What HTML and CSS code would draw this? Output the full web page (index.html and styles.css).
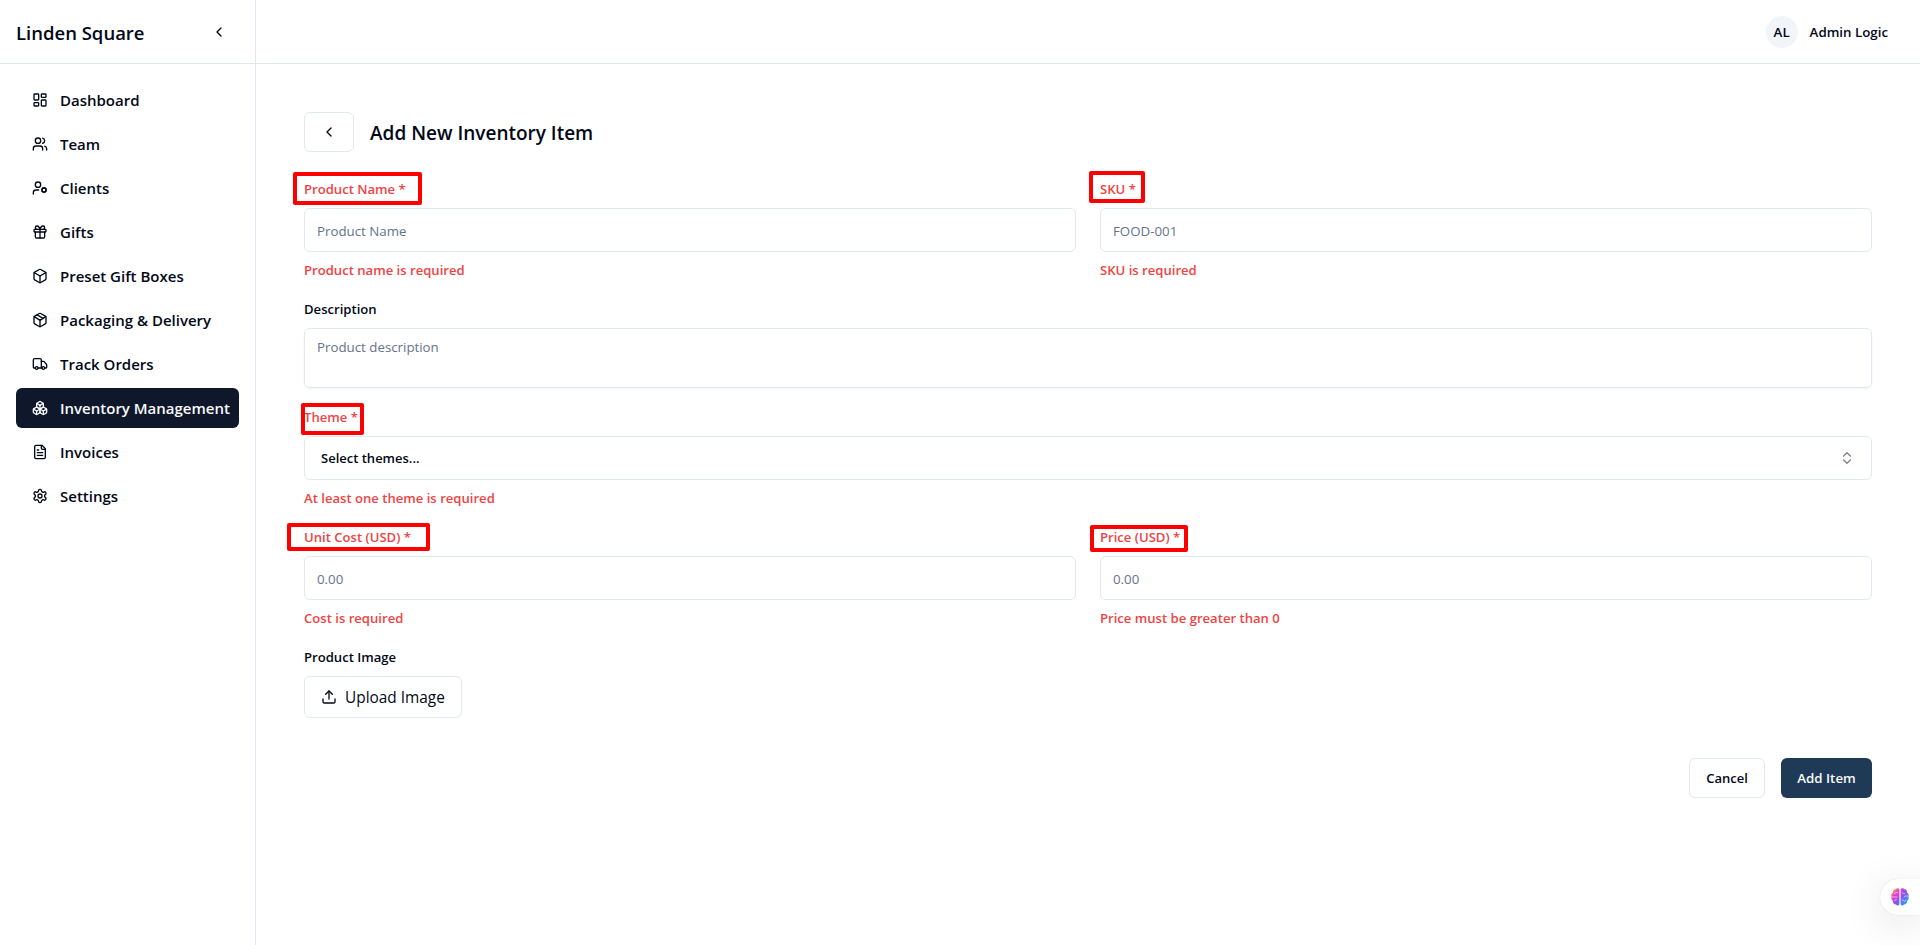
FILE: index.html
```
<!DOCTYPE html>
<html lang="en">
<head>
  <meta charset="UTF-8" />
  <meta name="viewport" content="width=device-width, initial-scale=1.0"/>
  <title>Linden Square</title>
  <link rel="stylesheet" href="styles.css">
</head>
<body>
  <aside class="sidebar">
    <div class="sidebar-header">
      <span class="brand">Linden Square</span>
      <button class="collapse" aria-label="Collapse">
        <svg class="icon" viewBox="0 0 24 24"><path d="m15 18-6-6 6-6"/></svg>
      </button>
    </div>
    <nav class="nav">
      <a class="nav-item">
        <svg class="icon" viewBox="0 0 24 24"><rect width="7" height="9" x="3" y="3" rx="1"/><rect width="7" height="5" x="14" y="3" rx="1"/><rect width="7" height="9" x="14" y="12" rx="1"/><rect width="7" height="5" x="3" y="16" rx="1"/></svg>
        <span>Dashboard</span>
      </a>
      <a class="nav-item">
        <svg class="icon" viewBox="0 0 24 24"><path d="M16 21v-2a4 4 0 0 0-4-4H6a4 4 0 0 0-4 4v2"/><circle cx="9" cy="7" r="4"/><path d="M22 21v-2a4 4 0 0 0-3-3.87"/><path d="M16 3.13a4 4 0 0 1 0 7.75"/></svg>
        <span>Team</span>
      </a>
      <a class="nav-item">
        <svg class="icon" viewBox="0 0 24 24"><circle cx="18" cy="15" r="3"/><circle cx="9" cy="7" r="4"/><path d="M10 15H6a4 4 0 0 0-4 4v2"/><path d="m21.7 16.4-.9-.3"/><path d="m15.2 13.9-.9-.3"/><path d="m16.6 18.7.3-.9"/><path d="m19.1 12.2.3-.9"/><path d="m19.6 18.7-.4-1"/><path d="m16.8 12.3-.4-1"/><path d="m14.3 16.6 1-.4"/><path d="m20.7 13.8 1-.4"/></svg>
        <span>Clients</span>
      </a>
      <a class="nav-item">
        <svg class="icon" viewBox="0 0 24 24"><rect x="3" y="8" width="18" height="4" rx="1"/><path d="M12 8v13"/><path d="M19 12v7a2 2 0 0 1-2 2H7a2 2 0 0 1-2-2v-7"/><path d="M7.5 8a2.5 2.5 0 0 1 0-5A4.8 8 0 0 1 12 8a4.8 8 0 0 1 4.5-5 2.5 2.5 0 0 1 0 5"/></svg>
        <span>Gifts</span>
      </a>
      <a class="nav-item">
        <svg class="icon" viewBox="0 0 24 24"><path d="M21 8a2 2 0 0 0-1-1.73l-7-4a2 2 0 0 0-2 0l-7 4A2 2 0 0 0 3 8v8a2 2 0 0 0 1 1.73l7 4a2 2 0 0 0 2 0l7-4A2 2 0 0 0 21 16Z"/><path d="m3.3 7 8.7 5 8.7-5"/><path d="M12 22V12"/></svg>
        <span>Preset Gift Boxes</span>
      </a>
      <a class="nav-item">
        <svg class="icon" viewBox="0 0 24 24"><path d="M11 21.73a2 2 0 0 0 2 0l7-4A2 2 0 0 0 21 16V8a2 2 0 0 0-1-1.73l-7-4a2 2 0 0 0-2 0l-7 4A2 2 0 0 0 3 8v8a2 2 0 0 0 1 1.73z"/><path d="M12 22V12"/><path d="m3.3 7 7.703 4.734a2 2 0 0 0 1.994 0L20.7 7"/><path d="m7.5 4.27 9 5.15"/></svg>
        <span>Packaging &amp; Delivery</span>
      </a>
      <a class="nav-item">
        <svg class="icon" viewBox="0 0 24 24"><path d="M14 18V6a2 2 0 0 0-2-2H4a2 2 0 0 0-2 2v11a1 1 0 0 0 1 1h2"/><path d="M15 18H9"/><path d="M19 18h2a1 1 0 0 0 1-1v-3.65a1 1 0 0 0-.22-.624l-3.48-4.35A1 1 0 0 0 17.52 8H14"/><circle cx="17" cy="18" r="2"/><circle cx="7" cy="18" r="2"/></svg>
        <span>Track Orders</span>
      </a>
      <a class="nav-item active">
        <svg class="icon" viewBox="0 0 24 24"><path d="M2.97 12.92A2 2 0 0 0 2 14.63v3.24a2 2 0 0 0 .97 1.71l3 1.8a2 2 0 0 0 2.06 0L12 19v-5.5l-5-3-4.03 2.42Z"/><path d="m7 16.5-4.74-2.85"/><path d="m7 16.5 5-3"/><path d="M7 16.5v5.17"/><path d="M12 13.5V19l3.97 2.38a2 2 0 0 0 2.06 0l3-1.8a2 2 0 0 0 .97-1.71v-3.24a2 2 0 0 0-.97-1.71L17 10.5l-5 3Z"/><path d="m17 16.5-5-3"/><path d="m17 16.5 4.74-2.85"/><path d="M17 16.5v5.17"/><path d="M7.97 4.42A2 2 0 0 0 7 6.13v4.37l5 3 5-3V6.13a2 2 0 0 0-.97-1.71l-3-1.8a2 2 0 0 0-2.06 0l-3 1.8Z"/><path d="M12 8 7.26 5.15"/><path d="m12 8 4.74-2.85"/><path d="M12 13.5V8"/></svg>
        <span>Inventory Management</span>
      </a>
      <a class="nav-item">
        <svg class="icon" viewBox="0 0 24 24"><path d="M15 2H6a2 2 0 0 0-2 2v16a2 2 0 0 0 2 2h12a2 2 0 0 0 2-2V7Z"/><path d="M14 2v4a2 2 0 0 0 2 2h4"/><path d="M10 9H8"/><path d="M16 13H8"/><path d="M16 17H8"/></svg>
        <span>Invoices</span>
      </a>
      <a class="nav-item">
        <svg class="icon" viewBox="0 0 24 24"><path d="M12.22 2h-.44a2 2 0 0 0-2 2v.18a2 2 0 0 1-1 1.73l-.43.25a2 2 0 0 1-2 0l-.15-.08a2 2 0 0 0-2.73.73l-.22.38a2 2 0 0 0 .73 2.73l.15.1a2 2 0 0 1 1 1.72v.51a2 2 0 0 1-1 1.74l-.15.09a2 2 0 0 0-.73 2.73l.22.38a2 2 0 0 0 2.73.73l.15-.08a2 2 0 0 1 2 0l.43.25a2 2 0 0 1 1 1.73V20a2 2 0 0 0 2 2h.44a2 2 0 0 0 2-2v-.18a2 2 0 0 1 1-1.73l.43-.25a2 2 0 0 1 2 0l.15.08a2 2 0 0 0 2.73-.73l.22-.39a2 2 0 0 0-.73-2.73l-.15-.08a2 2 0 0 1-1-1.74v-.5a2 2 0 0 1 1-1.74l.15-.09a2 2 0 0 0 .73-2.73l-.22-.38a2 2 0 0 0-2.73-.73l-.15.08a2 2 0 0 1-2 0l-.43-.25a2 2 0 0 1-1-1.73V4a2 2 0 0 0-2-2z"/><circle cx="12" cy="12" r="3"/></svg>
        <span>Settings</span>
      </a>
    </nav>
  </aside>

  <div class="page">
    <header class="topbar">
      <span class="avatar">AL</span>
      <span class="user-name">Admin Logic</span>
    </header>

    <main class="content">
      <div class="title-row">
        <button class="btn back" aria-label="Back">
          <svg class="icon" viewBox="0 0 24 24"><path d="m15 18-6-6 6-6"/></svg>
        </button>
        <h1>Add New Inventory Item</h1>
      </div>

      <form class="form">
        <div class="row">
          <div class="field invalid">
            <label>Product Name *</label>
            <span class="mark mark-name"></span>
            <input type="text" placeholder="Product Name"/>
            <p class="error">Product name is required</p>
          </div>
          <div class="field invalid">
            <label>SKU *</label>
            <span class="mark mark-sku"></span>
            <input type="text" placeholder="FOOD-001"/>
            <p class="error">SKU is required</p>
          </div>
        </div>

        <div class="field">
          <label>Description</label>
          <textarea placeholder="Product description"></textarea>
        </div>

        <div class="field invalid">
          <label>Theme *</label>
          <span class="mark mark-theme"></span>
          <button type="button" class="select">
            <span>Select themes...</span>
            <svg class="icon" viewBox="0 0 24 24"><path d="m7 15 5 5 5-5"/><path d="m7 9 5-5 5 5"/></svg>
          </button>
          <p class="error">At least one theme is required</p>
        </div>

        <div class="row">
          <div class="field invalid">
            <label>Unit Cost (USD) *</label>
            <span class="mark mark-cost"></span>
            <input type="text" placeholder="0.00"/>
            <p class="error">Cost is required</p>
          </div>
          <div class="field invalid">
            <label>Price (USD) *</label>
            <span class="mark mark-price"></span>
            <input type="text" placeholder="0.00"/>
            <p class="error">Price must be greater than 0</p>
          </div>
        </div>

        <div class="field">
          <label>Product Image</label>
          <button type="button" class="upload">
            <svg class="icon" viewBox="0 0 24 24"><path d="M21 15v4a2 2 0 0 1-2 2H5a2 2 0 0 1-2-2v-4"/><path d="m17 8-5-5-5 5"/><path d="M12 3v12"/></svg>
            <span>Upload Image</span>
          </button>
        </div>

        <div class="actions">
          <button type="button" class="btn cancel">Cancel</button>
          <button type="button" class="btn primary">Add Item</button>
        </div>
      </form>
    </main>
  </div>

  <div class="assistant">
    <svg class="brain" viewBox="0 0 18 18">
      <defs>
        <linearGradient id="brainFill" gradientUnits="userSpaceOnUse" x1="2" y1="2" x2="16" y2="15">
          <stop offset="0" stop-color="#ff9a3c"/>
          <stop offset="0.25" stop-color="#e83bd0"/>
          <stop offset="0.6" stop-color="#8a55f0"/>
          <stop offset="1" stop-color="#1fa8ff"/>
        </linearGradient>
      </defs>
      <path fill="url(#brainFill)" d="M8.400 1.600C7.800 0 5.400-.1 4.500 1.300 2.800 1.300 1.700 3 2.100 4.600.6 5.500-.2 7.300.6 8.800c-.6 1.700 0 3.300 1.300 4.100 0 2 1.200 3.500 2.900 3.600 1.100 1.500 3 1.300 3.600-.2z"/>
      <path fill="url(#brainFill)" d="M9.600 1.600c.6-1.600 3-1.700 3.900-.3 1.700 0 2.800 1.700 2.400 3.300 1.500.9 2.300 2.700 1.500 4.200.6 1.700 0 3.300-1.300 4.100 0 2-1.200 3.500-2.900 3.600-1.100 1.500-3 1.300-3.600-.2z"/>
      <path class="folds" d="M3 5.500c1 0 1.600-.3 2-1 .8.400 1.700.3 2.300-.2M.8 9h5.700M3.500 13c.3-1 1.200-1.500 2.300-1.300M11 4.500c.8 1 1.800 1.400 3 1.100M17 8h-2.200c-1 0-1.500.6-1.700 1.300M10.800 12c1.200 0 2.200.5 2.500 1.500M13.300 13.500l1.700-1.300"/>
    </svg>
  </div>
</body>
</html>
```
FILE: styles.css
```
* {
  box-sizing: border-box;
}
body {
  margin: 0;
  height: 100vh;
  display: flex;
  overflow: hidden;
  font-family: 'Segoe UI', 'Open Sans', 'Noto Sans', sans-serif;
  font-size: 15px;
  line-height: 24px;
  color: #020817;
  background: #fff;
}
h1, p {
  margin: 0;
}
button, input, textarea {
  font-family: inherit;
  color: inherit;
  background: #fff;
}
.icon {
  width: 16px;
  height: 16px;
  flex-shrink: 0;
  fill: none;
  stroke: currentColor;
  stroke-width: 2;
  stroke-linecap: round;
  stroke-linejoin: round;
}

/* sidebar */
.sidebar {
  width: 256px;
  flex-shrink: 0;
  border-right: 1px solid #e2e8f0;
}
.sidebar-header {
  height: 64px;
  padding: 0 16px;
  display: flex;
  align-items: center;
  justify-content: space-between;
  border-bottom: 1px solid #e2e8f0;
}
.brand {
  font-size: 18.5px;
  font-weight: 600;
  padding-top: 2px;
}
.collapse {
  width: 40px;
  height: 40px;
  padding: 0;
  border: none;
  display: flex;
  align-items: center;
  justify-content: center;
}
.nav {
  padding: 16px;
  display: flex;
  flex-direction: column;
  gap: 4px;
}
.nav-item {
  height: 40px;
  padding-left: 16px;
  display: flex;
  align-items: center;
  gap: 12px;
  border-radius: 6px;
  font-weight: 600;
  white-space: nowrap;
}
.nav-item.active {
  background: #0f172a;
  color: #f8fafc;
}

/* top bar */
.page {
  flex: 1;
}
.topbar {
  height: 64px;
  padding-right: 32px;
  display: flex;
  align-items: center;
  justify-content: flex-end;
  gap: 12px;
  border-bottom: 1px solid #e2e8f0;
  font-size: 13.3px;
  font-weight: 600;
}
.avatar {
  width: 32px;
  height: 32px;
  border-radius: 50%;
  display: flex;
  align-items: center;
  justify-content: center;
  background: #f1f5f9;
}

/* form */
.content {
  padding: 48px;
}
.title-row {
  display: flex;
  align-items: center;
  gap: 16px;
  margin-bottom: 24px;
}
h1 {
  font-size: 19px;
  font-weight: 600;
  padding-top: 2px;
}
.btn {
  height: 40px;
  padding: 0 16px;
  display: flex;
  align-items: center;
  border: 1px solid #e2e8f0;
  border-radius: 6px;
  font-size: 13px;
  font-weight: 600;
}
.form {
  display: flex;
  flex-direction: column;
  gap: 16px;
}
.row {
  display: grid;
  grid-template-columns: 1fr 1fr;
  gap: 24px;
}
.field {
  position: relative;
  display: flex;
  flex-direction: column;
  gap: 8px;
}
label {
  font-size: 13.1px;
  font-weight: 600;
  padding-top: 1px;
  height: 24px;
}
.error {
  font-size: 13.1px;
  font-weight: 600;
  line-height: 20px;
}
.invalid label,
.error {
  color: #ef4444;
}
input, textarea, .select {
  width: 100%;
  height: 44px;
  padding: 8px 12px;
  border: 1px solid #e2e8f0;
  border-radius: 6px;
  font-size: 13.3px;
}
input {
  padding-top: 10px;
}
textarea {
  height: 60px;
  display: block;
  resize: none;
  line-height: 20px;
  box-shadow: 0 1px 2px rgba(0, 0, 0, 0.05);
}
input::placeholder, textarea::placeholder {
  color: #64748b;
}
.select {
  padding: 0 16px;
  display: flex;
  align-items: center;
  justify-content: space-between;
  font-size: 13px;
  font-weight: 600;
}
.select .icon {
  opacity: 0.5;
}
.upload {
  width: 158px;
  height: 42px;
  padding: 0 16px;
  display: flex;
  align-items: center;
  gap: 8px;
  border: 1px solid #e2e8f0;
  border-radius: 6px;
  font-size: 15.4px;
  white-space: nowrap;
}
.actions {
  display: flex;
  justify-content: flex-end;
  gap: 16px;
  margin-top: 24px;
}
.cancel, .primary {
  justify-content: center;
  padding: 0;
}
.cancel {
  width: 76px;
}
.primary {
  width: 91px;
  border: none;
  background: #1e3a56;
  color: #f8fafc;
  font-size: 13.3px;
}

/* red frames around the required labels */
.mark {
  position: absolute;
  border: 4px solid #ff0000;
  border-radius: 2px;
}
.mark-name {
  left: -11px;
  top: -4px;
  width: 129px;
  height: 33px;
}
.mark-sku {
  left: -11px;
  top: -5px;
  width: 56px;
  height: 32px;
}
.mark-theme {
  left: -3px;
  top: -1px;
  width: 63px;
  height: 32px;
}
.mark-cost {
  left: -17px;
  top: -1px;
  width: 143px;
  height: 28px;
}
.mark-price {
  left: -10px;
  top: 1px;
  width: 98px;
  height: 27px;
}

/* floating assistant button */
.assistant {
  position: absolute;
  right: 0;
  bottom: 30px;
  width: 40px;
  height: 36px;
  padding: 9px 11px;
  border-radius: 18px 0 0 18px;
  background: #fff;
  box-shadow: 0 0 1px rgba(0, 0, 0, 0.2), 0 8px 40px rgba(0, 0, 0, 0.12);
}
.brain {
  display: block;
  width: 18px;
  height: 18px;
}
.folds {
  fill: none;
  stroke: #fff;
  stroke-width: 0.8;
  stroke-opacity: 0.7;
}
```
